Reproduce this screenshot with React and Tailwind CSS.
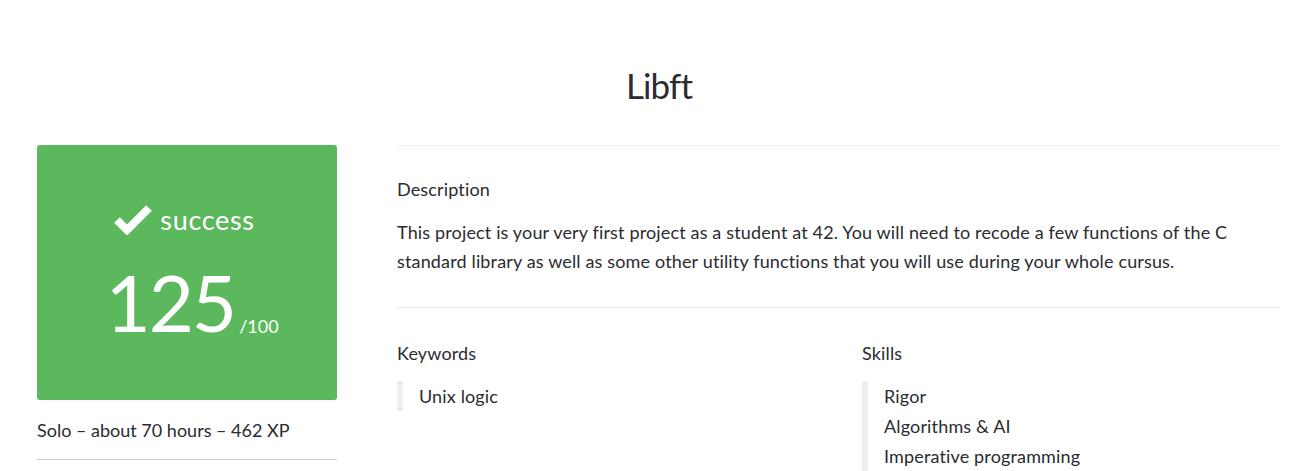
import React from "react";

const skills = ["Rigor", "Algorithms & AI", "Imperative programming"];

const CheckMark = () => (
  <svg width="38" height="32" viewBox="0 0 38 32" className="mr-2">
    <path d="M3 17 L13 27 L35 5" fill="none" stroke="white" strokeWidth="8" strokeLinejoin="miter" />
  </svg>
);

const App = () => {
  return (
    <div className="min-h-screen bg-white text-[#2b2b30]" style={{ fontFamily: "Lato, 'Open Sans', sans-serif" }}>
      <div className="ml-[37px] mr-[34px] pt-[58px]">
        {/* Title */}
        <h1 className="text-center text-[35px] leading-[54px] font-normal tracking-tight">Libft</h1>

        <div className="flex mt-[33px]">
          {/* Left column */}
          <div className="w-[300px] shrink-0">
            <div className="h-[255px] rounded-[3px] bg-[#5cb85c] text-white flex flex-col items-center pt-[58px]">
              <div className="flex items-center ml-[-5px]">
                <CheckMark />
                <span className="text-[27px] leading-none tracking-wide">success</span>
              </div>
              <div className="flex items-end mt-[30px] ml-[10px]">
                <span className="text-[78px] leading-[74px] font-normal tracking-[-2px]">125</span>
                <span className="text-[18px] leading-none mb-[4px] ml-[4px]">/100</span>
              </div>
            </div>
            <p className="text-[18px] leading-none mt-[21px]">Solo – about 70 hours – 462 XP</p>
            <div className="border-b border-[#ccc] mt-[20px]" />
          </div>

          {/* Right column */}
          <div className="flex-1 ml-[60px] border-t border-[#eee] tracking-[0.15px]">
            <div className="pt-[32px] pb-[31px] border-b border-[#eee]">
              <h2 className="text-[18px] leading-[22px]">Description</h2>
              <p className="text-[18px] leading-[29px] mt-[18px] pr-[40px]">
                This project is your very first project as a student at 42. You will need to recode a few functions of the C standard library as well as some other utility functions that you will use during your whole cursus.
              </p>
            </div>

            <div className="flex pt-[34px]">
              <div className="w-[465px]">
                <h2 className="text-[18px] leading-[22px]">Keywords</h2>
                <div className="mt-[17px] border-l-[6px] border-[#eee] pl-[16px]">
                  <p className="text-[18px] leading-[30px]">Unix logic</p>
                </div>
              </div>
              <div className="flex-1">
                <h2 className="text-[18px] leading-[22px]">Skills</h2>
                <div className="mt-[17px] border-l-[6px] border-[#eee] pl-[16px]">
                  {skills.map((s) => (
                    <p key={s} className="text-[18px] leading-[30px]">{s}</p>
                  ))}
                </div>
              </div>
            </div>
          </div>
        </div>
      </div>
    </div>
  );
};

export default App;
